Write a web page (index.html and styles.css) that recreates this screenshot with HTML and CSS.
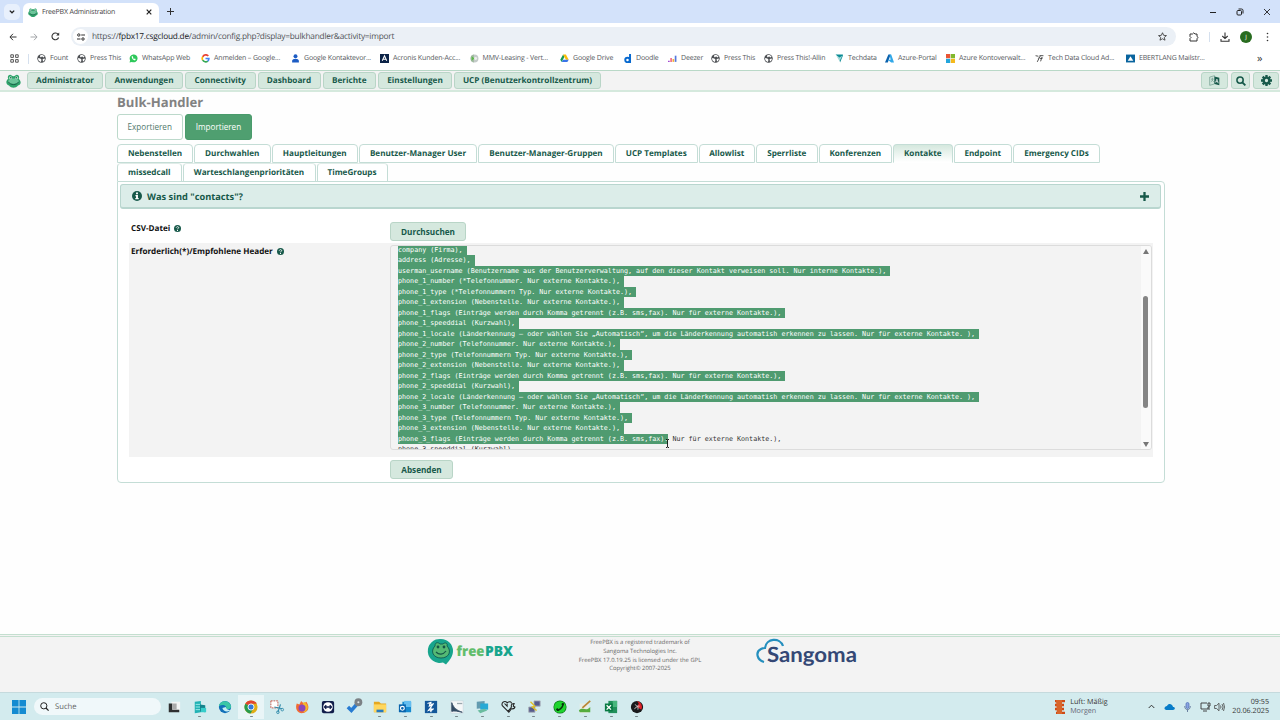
FILE: index.html
```html
<!DOCTYPE html>
<html lang="de">

<head>
    <meta charset="UTF-8">
    <meta name="viewport" content="width=device-width, initial-scale=1.0">
    <title>FreePBX Administration</title>
    <link rel="stylesheet" href="styles.css">
</head>

<body>
    <!-- Shared icons -->
    <svg class="sprite" width="0" height="0">
        <symbol id="frog" viewBox="0 0 20 18">
            <path d="M3 6C1 2 5-1 8 2c1 .7 3 .7 4 0 3-3 7 0 5 4 4 4 3 8-1 9-3 4-9 4-12 0C0 14-1 9 3 6z" fill="#2fa36b"/>
            <path d="M4 7c3-2 9-2 12 0 2 3 1 5-2 5-3 1-5 1-8 0-3 0-4-2-2-5z" fill="#6cc59a"/>
            <circle cx="6" cy="4.5" r="2" fill="#b6e5cc"/><circle cx="14" cy="4.5" r="2" fill="#b6e5cc"/>
            <circle cx="6.3" cy="4.8" r="1" fill="#175a44"/><circle cx="13.7" cy="4.8" r="1" fill="#175a44"/>
            <path d="M3 10c3 5 11 5 14 0" fill="none" stroke="#175a44" stroke-width="1.2"/>
        </symbol>
        <symbol id="globe" viewBox="0 0 16 16">
            <circle cx="8" cy="8" r="7.500" fill="#4a4d51"/>
            <path d="M2 7l4 1 2 2-1 4C3 13 1.500 10 2 7zM6 2c3-1 6 0 7.500 3L11 6 9 4 7 6 5 4zM10 9l4-1c0 3-1.500 5-3.500 5.500z" fill="#fff"/>
        </symbol>
        <symbol id="help" viewBox="0 0 16 16">
            <circle cx="8" cy="8" r="8" fill="#17594a"/>
            <path d="M5.300 6.200C5.500 2.800 11 3 10.700 6.200 10.500 8 8 7.800 8 9.800" fill="none" stroke="#fff" stroke-width="2"/>
            <circle cx="8" cy="12.300" r="1.300" fill="#fff"/>
        </symbol>
    </svg>

    <!-- Browser tabs -->
    <div class="tabbar">
        <div class="tab-search"><svg width="6" height="4" viewBox="0 0 6 4"><path d="M.8.6L3 2.800 5.200.6" fill="none" stroke="#222" stroke-width="1.300"/></svg></div>
        <div class="browser-tab">
            <svg width="10" height="9"><use href="#frog"/></svg>
            <span>FreePBX Administration</span>
            <svg class="tab-close" width="6" height="6" viewBox="0 0 6 6"><path d="M.7.7l4.600 4.600M5.300.7L.7 5.300" stroke="#222" stroke-width="1.200"/></svg>
        </div>
        <svg class="tab-new" width="7" height="7" viewBox="0 0 7 7"><path d="M3.500 0v7M0 3.500h7" stroke="#333" stroke-width="1"/></svg>
        <div class="window-buttons">
            <svg width="8" height="8" viewBox="0 0 8 8"><path d="M1 4.500h6" stroke="#222"/></svg>
            <svg width="8" height="8" viewBox="0 0 8 8"><rect x="1" y="2.500" width="4.500" height="4.500" rx="1" fill="none" stroke="#222"/><path d="M2.500 1H5.500Q7 1 7 2.500V5.500" fill="none" stroke="#222"/></svg>
            <svg width="8" height="8" viewBox="0 0 8 8"><path d="M1 1l6 6M7 1L1 7" stroke="#222" stroke-width=".9"/></svg>
        </div>
    </div>

    <!-- Address bar -->
    <div class="toolbar">
        <svg width="8" height="8" viewBox="0 0 8 8"><path d="M7.500 4H1M4 .8L.9 4 4 7.200" fill="none" stroke="#333" stroke-width="1"/></svg>
        <svg width="8" height="8" viewBox="0 0 8 8"><path d="M.5 4H7M4 .8L7.100 4 4 7.200" fill="none" stroke="#a3a6a9" stroke-width="1"/></svg>
        <svg width="9" height="9" viewBox="0 0 9 9"><path d="M7.600 5.500A3.400 3.400 0 1 1 7.200 2.500" fill="none" stroke="#333" stroke-width="1.100"/><path d="M8.200.6v3H5.200z" fill="#333"/></svg>
        <div class="url">
            <div class="site-info"><svg width="8" height="8" viewBox="0 0 8 8"><path d="M4.200 2H8M0 6h3.500" stroke="#333" stroke-width="1.100"/><circle cx="1.800" cy="2" r="1.200" fill="none" stroke="#333"/><circle cx="6" cy="6" r="1.200" fill="none" stroke="#333"/></svg></div>
            <span class="address">https://<b>fpbx17.csgcloud.de</b>/admin/config.php?display=bulkhandler&amp;activity=import</span>
            <svg class="star" width="9" height="9" viewBox="0 0 10 10"><path d="M5 .8l1.300 2.900 3.100.3-2.400 2 .8 3.100L5 7.500 2.200 9.100 3 6 .6 4l3.100-.3z" fill="none" stroke="#333" stroke-width=".9"/></svg>
        </div>
        <div class="toolbar-right">
            <svg width="10" height="10" viewBox="0 0 10 10"><path d="M1 2h2.500Q4.700-.3 6 2h2v2.500q2.300 1 0 2.200V9H1V6.500q2-1 0-2z" fill="none" stroke="#333"/></svg>
            <i class="divider"></i>
            <svg width="10" height="10" viewBox="0 0 10 10"><path d="M5 .5v6M2.300 4L5 6.600 7.700 4M1 7v2.300h8V7" fill="none" stroke="#333" stroke-width="1.100"/></svg>
            <span class="avatar">J</span>
            <svg class="menu-dots" width="3" height="10" viewBox="0 0 3 10"><g fill="#333"><circle cx="1.500" cy="1.500" r=".8"/><circle cx="1.500" cy="5" r=".8"/><circle cx="1.500" cy="8.500" r=".8"/></g></svg>
        </div>
    </div>

    <!-- Bookmarks -->
    <div class="bookmarks">
        <a><svg viewBox="0 0 9 9"><g fill="none" stroke="#444" stroke-width=".9"><path d="M.8.8h2.600v2.600H.8zM5.600.8h2.600v2.600H5.600zM.8 5.600h2.600v2.600H.8zM5.600 5.600h2.600v2.600H5.600z"/></g></svg><i class="divider"></i></a>
        <a><svg><use href="#globe"/></svg>Fount</a>
        <a><svg><use href="#globe"/></svg>Press This</a>
        <a><svg viewBox="0 0 16 16"><path d="M1 15l1-4A7 7 0 1 1 5 14z" fill="#2dc85a"/><path d="M5 4c-1 3 3 8 6 7l1-2-2-1-1 1-2-2 .7-1-.9-2z" fill="#fff"/></svg>WhatsApp Web</a>
        <a><svg viewBox="0 0 16 16" fill="none" stroke-width="3"><path d="M13 3.500A6 6 0 0 0 3 5" stroke="#e94335"/><path d="M3 5a6 6 0 0 0 0 6" stroke="#fbbc05"/><path d="M3 11a6 6 0 0 0 9 1.500" stroke="#34a853"/><path d="M12 12.500A6 6 0 0 0 14 8H8" stroke="#4285f4"/></svg>Anmelden – Google...</a>
        <a><svg viewBox="0 0 16 16"><circle cx="8" cy="4" r="3.500" fill="#1d5cc4"/><path d="M2 15v-3c0-5 12-5 12 0v3z" fill="#1d5cc4"/></svg>Google Kontaktevor...</a>
        <a><svg viewBox="0 0 16 16"><path d="M0 0h16v16H0z" fill="#0b2347"/><path d="M4 12L8 3l4 9M5.500 9.500h5" fill="none" stroke="#fff" stroke-width="1.800"/></svg>Acronis Kunden-Acc...</a>
        <a><svg viewBox="0 0 16 16"><circle cx="8" cy="8" r="7" fill="#c4cbc9"/><path d="M1 8a7 7 0 0 1 6-7v14a7 7 0 0 1-6-7z" fill="#a2bba2"/><path d="M3 4l5 4-5 4z" fill="#59b947"/><circle cx="10" cy="8" r="2.500" fill="#eee"/></svg>MMV-Leasing - Vert...</a>
        <a><svg viewBox="0 0 16 16"><path d="M5.500 1L8 5 3 14 .5 10z" fill="#159957"/><path d="M5.500 1h5l5 9h-5z" fill="#fbbc05"/><path d="M5.500 10h10L13 14H3z" fill="#3975e8"/></svg>Google Drive</a>
        <a><svg viewBox="0 0 16 16"><path d="M12.500 0v16M12 10.500a4 4 0 1 1-8 0 4 4 0 0 1 8 0z" fill="none" stroke="#0869cf" stroke-width="3.500"/></svg>Doodle</a>
        <a><svg viewBox="0 0 16 16"><path d="M0 12h3v2H0z" fill="#a44ad1"/><path d="M4 7h3v7H4z" fill="#f06c8a"/><path d="M8 9h3v5H8z" fill="#f5ad32"/><path d="M12 3h3v11h-3z" fill="#5579dc"/></svg>Deezer</a>
        <a><svg><use href="#globe"/></svg>Press This</a>
        <a><svg><use href="#globe"/></svg>Press This!-Allin</a>
        <a><svg viewBox="0 0 16 16"><path d="M1 1h13v2L9 15l-2-9z" fill="#0b8b94"/><path d="M2 2l6 4 5-3-5 10z" fill="#a0d8d8"/></svg>Techdata</a>
        <a><svg viewBox="0 0 16 16"><path d="M6 1h4L5 15H0z" fill="#0b62ad"/><path d="M8 1h3l5 14h-5L5 10h5z" fill="#32a8e8"/></svg>Azure-Portal</a>
        <a><svg viewBox="0 0 16 16"><path d="M0 0h7.500v7.500H0z" fill="#e95535"/><path d="M8.500 0H16v7.500H8.500z" fill="#80b82d"/><path d="M0 8.500h7.500V16H0z" fill="#23a5dc"/><path d="M8.500 8.500H16V16H8.500z" fill="#f5b91d"/></svg>Azure Kontoverwalt...</a>
        <a><svg viewBox="0 0 16 16"><path d="M1 3l5 1M8 3h7M6 8l4-5M4 14l4-8M10 13l2-7M9 8l5-1" stroke="#333" stroke-width="1.500"/></svg>Tech Data Cloud Ad...</a>
        <a><svg viewBox="0 0 16 16"><path d="M0 1h16v14H0z" fill="#09649e"/><path d="M3 12l5-8 5 8z" fill="#fff"/></svg>EBERTLANG Mailstr...</a>
        <a class="more">»</a>
    </div>

    <!-- Main navigation -->
    <nav class="navbar">
        <svg class="nav-logo" width="15" height="14"><use href="#frog"/></svg>
        <div class="nav-items">
            <a>Administrator</a>
            <a>Anwendungen</a>
            <a>Connectivity</a>
            <a>Dashboard</a>
            <a>Berichte</a>
            <a>Einstellungen</a>
            <a>UCP (Benutzerkontrollzentrum)</a>
        </div>
        <div class="nav-tools">
            <a><svg width="11" height="11" viewBox="0 0 16 16"><path d="M1 3l7-2v12l-7 2z" fill="#cfe5db" stroke="#709b8c"/><path d="M8 2l7 2v11l-7-2z" fill="#17594a"/><path d="M3 6h4M5 4v2c0 3-2 4-2 4m1-3l3 3" stroke="#709b8c" fill="none"/><path d="M9.500 11l2-5 2 6M10 9.500l3 .5" stroke="#fff" fill="none"/></svg></a>
            <a><svg width="10" height="10" viewBox="0 0 16 16"><circle cx="6.500" cy="6.500" r="5" fill="none" stroke="#17594a" stroke-width="2.500"/><path d="M10.500 10.500L15 15" stroke="#17594a" stroke-width="3"/></svg></a>
            <a><svg width="11" height="11" viewBox="0 0 16 16"><circle cx="8" cy="8" r="4.200" fill="none" stroke="#17594a" stroke-width="3.600"/><path d="M8 0v3M8 13v3M0 8h3M13 8h3M2.400 2.400l2 2M11.600 11.600l2 2M2.400 13.600l2-2M11.600 4.400l2-2" stroke="#17594a" stroke-width="3.400"/></svg></a>
        </div>
    </nav>

    <!-- Page content -->
    <main class="page">
        <h1>Bulk-Handler</h1>
        <div class="mode-buttons">
            <button class="mode">Exportieren</button>
            <button class="mode mode-active">Importieren</button>
        </div>

        <div class="tabs">
            <a>Nebenstellen</a>
            <a>Durchwahlen</a>
            <a>Hauptleitungen</a>
            <a>Benutzer-Manager User</a>
            <a>Benutzer-Manager-Gruppen</a>
            <a>UCP Templates</a>
            <a>Allowlist</a>
            <a>Sperrliste</a>
            <a>Konferenzen</a>
            <a class="active">Kontakte</a>
            <a>Endpoint</a>
            <a>Emergency CIDs</a>
        </div>
        <div class="tabs tabs-second">
            <a>missedcall</a>
            <a>Warteschlangenprioritäten</a>
            <a>TimeGroups</a>
        </div>

        <section class="panel">
            <div class="info-bar">
                <svg width="10" height="10" viewBox="0 0 16 16"><circle cx="8" cy="8" r="8" fill="#17594a"/><path d="M6.500 2.500h3v2.800h-3zM5.500 6.500h4v4.500h1.200v2H5.300v-2h1.200V8.500h-1z" fill="#fff"/></svg>
                <span>Was sind "contacts"?</span>
                <svg class="plus" width="9" height="9" viewBox="0 0 9 9"><path d="M4.500 0v9M0 4.500h9" stroke="#17594a" stroke-width="2.300"/></svg>
            </div>
            <div class="form-row">
                <label>CSV-Datei <svg width="7" height="7"><use href="#help"/></svg></label>
                <button class="btn">Durchsuchen</button>
            </div>
            <div class="form-row form-row-shaded">
                <label>Erforderlich(*)/Empfohlene Header <svg width="7" height="7"><use href="#help"/></svg></label>
                <div class="header-box">
                    <div class="header-list">
                        <p><mark>company (Firma), </mark></p>
                        <p><mark>address (Adresse), </mark></p>
                        <p><mark>userman_username (Benutzername aus der Benutzerverwaltung, auf den dieser Kontakt verweisen soll. Nur interne Kontakte.), </mark></p>
                        <p><mark>phone_1_number (*Telefonnummer. Nur externe Kontakte.), </mark></p>
                        <p><mark>phone_1_type (*Telefonnummern Typ. Nur externe Kontakte.), </mark></p>
                        <p><mark>phone_1_extension (Nebenstelle. Nur externe Kontakte.), </mark></p>
                        <p><mark>phone_1_flags (Einträge werden durch Komma getrennt (z.B. sms,fax). Nur für externe Kontakte.), </mark></p>
                        <p><mark>phone_1_speeddial (Kurzwahl), </mark></p>
                        <p><mark>phone_1_locale (Länderkennung – oder wählen Sie „Automatisch“, um die Länderkennung automatish erkennen zu lassen. Nur für externe Kontakte. ), </mark></p>
                        <p><mark>phone_2_number (Telefonnummer. Nur externe Kontakte.), </mark></p>
                        <p><mark>phone_2_type (Telefonnummern Typ. Nur externe Kontakte.), </mark></p>
                        <p><mark>phone_2_extension (Nebenstelle. Nur externe Kontakte.), </mark></p>
                        <p><mark>phone_2_flags (Einträge werden durch Komma getrennt (z.B. sms,fax). Nur für externe Kontakte.), </mark></p>
                        <p><mark>phone_2_speeddial (Kurzwahl), </mark></p>
                        <p><mark>phone_2_locale (Länderkennung – oder wählen Sie „Automatisch“, um die Länderkennung automatish erkennen zu lassen. Nur für externe Kontakte. ), </mark></p>
                        <p><mark>phone_3_number (Telefonnummer. Nur externe Kontakte.), </mark></p>
                        <p><mark>phone_3_type (Telefonnummern Typ. Nur externe Kontakte.), </mark></p>
                        <p><mark>phone_3_extension (Nebenstelle. Nur externe Kontakte.), </mark></p>
                        <p><mark>phone_3_flags (Einträge werden durch Komma getrennt (z.B. sms,fax).</mark> Nur für externe Kontakte.),</p>
                        <p>phone_3_speeddial (Kurzwahl),</p>
                    </div>
                    <div class="scrollbar">
                        <svg width="6" height="5" viewBox="0 0 6 5"><path d="M3 0l3 5H0z" fill="#777"/></svg>
                        <i class="thumb"></i>
                        <svg width="6" height="5" viewBox="0 0 6 5"><path d="M3 5l3-5H0z" fill="#777"/></svg>
                    </div>
                </div>
            </div>
            <div class="form-row form-submit">
                <button class="btn">Absenden</button>
            </div>
        </section>
    </main>
    <svg class="text-cursor" width="5" height="9" viewBox="0 0 5 9"><path d="M1 .5h1l.5.5.5-.5h1M2.500 1v7M1 8.500h1l.5-.5.5.5h1" fill="none" stroke="#111" stroke-width=".9"/></svg>

    <!-- Footer -->
    <footer class="footer">
        <svg class="logo-freepbx" width="86" height="28" viewBox="0 0 86 28">
            <path d="M13 1a12 12 0 0 1 12 12c0 5-3 9-7 13.500l-3-2A12 12 0 1 1 13 1z" fill="#18a58d"/>
            <path d="M7 8c0-4 3-4 5-2h3c2-2 5-1 4 2 5 5 2 12-6 12S2 13 7 8z" fill="#55b974" stroke="#115b50" stroke-width=".9"/>
            <circle cx="10" cy="9" r="1.400" fill="#145548"/><circle cx="16" cy="9" r="1.400" fill="#145548"/><path d="M8 14c3 3 7 3 10-1" fill="none" stroke="#145548" stroke-width="1.200"/>
            <text x="28.500" y="18" textLength="28" lengthAdjust="spacingAndGlyphs" fill="#62bd6c">free</text>
            <text x="57" y="18" textLength="28" lengthAdjust="spacingAndGlyphs" fill="#18a58d">PBX</text>
        </svg>
        <div class="legal">
            FreePBX is a registered trademark of<br>
            Sangoma Technologies Inc.<br>
            FreePBX 17.0.19.25 is licensed under the GPL<br>
            Copyright© 2007-2025
        </div>
        <svg class="logo-sangoma" width="102" height="32" viewBox="0 0 102 32">
            <path d="M8 24C1 22-1 14 5 11c2-1 3-1 4-1C10 0 24-1 27 8" fill="none" stroke="#258fbe" stroke-width="2.200"/>
            <text x="11" y="23.500" textLength="90" lengthAdjust="spacingAndGlyphs" fill="#344875">Sangoma</text>
        </svg>
    </footer>

    <!-- Taskbar -->
    <div class="taskbar">
        <svg width="14" height="14" viewBox="0 0 14 14"><path d="M0 0h6.600v6.600H0zM7.400 0H14v6.600H7.400zM0 7.400h6.600V14H0zM7.400 7.400H14V14H7.400z" fill="#158bd1"/></svg>
        <div class="search"><svg width="9" height="9" viewBox="0 0 9 9"><circle cx="3.800" cy="3.800" r="3.100" fill="none" stroke="#222"/><path d="M6 6l2.600 2.600" stroke="#222" stroke-width="1.200"/></svg>Suche</div>
        <div class="apps">
            <a><svg viewBox="0 0 16 16"><path d="M5 2h10v10H5z" fill="#f3f5f5"/><path d="M2 4h4v7h8v3H2z" fill="#2f3031"/><path d="M6 4h5v7H6z" fill="#aaa"/></svg></a>
            <a class="open"><svg viewBox="0 0 16 16"><path d="M2 2l7-1v13l-7 1z" fill="#21b2b4"/><path d="M8 5l6 1v8l-6-1z" fill="#14838c"/><path d="M3 5h5M3 8h5M3 11h5" stroke="#a8eeee"/><path d="M9 9h6v5H9z" fill="#36cdca"/></svg></a>
            <a><svg viewBox="0 0 16 16"><circle cx="8" cy="8" r="7" fill="#1270b8"/><path d="M1 7c1-7 12-8 14 0 0 3-3 4-6 3 2-3-3-6-8-3z" fill="#3bc6a5"/><path d="M5 9c1 4 5 5 9 3-1-1-5-1-5-4z" fill="#c7edf4"/></svg></a>
            <a class="current"><svg viewBox="0 0 16 16"><circle cx="8" cy="8" r="7.500" fill="#e1ad16"/><path d="M8 8L1.500 4.300A7.500 7.500 0 0 1 14.500 4.300H8z" fill="#e04432"/><path d="M8 8l-6.500-3.800A7.500 7.500 0 0 0 7.500 15.500L11 9z" fill="#279b4d"/><circle cx="8" cy="8" r="3.500" fill="#3179db" stroke="#fff"/></svg></a>
            <a><svg viewBox="0 0 16 16"><path d="M1 1h8v8H1z" fill="#fff" stroke="#c54a3c" stroke-dasharray="2 1"/><path d="M5 8l9 2M12 5l-3 9" stroke="#318bab" stroke-width="1.300"/><circle cx="14" cy="11" r="1.500" fill="none" stroke="#318bab"/><circle cx="9" cy="14" r="1.500" fill="none" stroke="#318bab"/></svg></a>
            <a><svg viewBox="0 0 16 16"><path d="M2 4l3 1 2-4 3 3 3-2c6 9-1 13-5 13-6 0-8-6-6-11z" fill="#f26b32"/><path d="M10 2c6 3 6 9 1 12-3-1-3-7-1-12z" fill="#f6b728"/><circle cx="8" cy="9" r="4" fill="#8a45ba"/></svg></a>
            <a><svg viewBox="0 0 16 16"><rect x="1" y="1" width="14" height="14" rx="2" fill="#111e4b"/><circle cx="8" cy="8" r="5.500" fill="#fff"/><path d="M4 8h8M6 6L4 8l2 2M10 6l2 2-2 2" fill="none" stroke="#111e4b" stroke-width="1.500"/></svg></a>
            <a><svg viewBox="0 0 16 16"><path d="M1 8l4 4 7-8" fill="none" stroke="#277bd2" stroke-width="4"/><circle cx="13" cy="2.500" r="4.500" fill="#7b8185"/><circle cx="13" cy="2.500" r="1.200" fill="#dfe3e4"/></svg></a>
            <a class="open"><svg viewBox="0 0 16 16"><path d="M1 2h6l2 2h6v10H1z" fill="#e5a820"/><path d="M1 5h14v9H1z" fill="#ffd75e"/><path d="M4 11h8v3H4z" fill="#2679bd"/></svg></a>
            <a class="open"><svg viewBox="0 0 16 16"><path d="M5 2h10v12H5z" fill="#168bd0"/><path d="M7 1h8v7H7z" fill="#64bef0"/><path d="M1 5h8v9H1z" fill="#0864ad"/><circle cx="5" cy="9.500" r="2.200" fill="none" stroke="#fff" stroke-width="1.300"/></svg></a>
            <a class="open"><svg viewBox="0 0 16 16"><path d="M1 1h14v14H1z" fill="#14579a"/><path d="M4 4l3-1-1 4 5-3-6 8 6-2-4 3M8 2v12" fill="none" stroke="#fff" stroke-width="1.200"/></svg></a>
            <a class="open"><svg viewBox="0 0 16 16"><path d="M1 1h14v14H1z" fill="#f5f7f8" stroke="#c1cdd0" stroke-width=".5"/><path d="M2 3c2 6 6 9 12 11-5-1-9-2-12-1z" fill="#334b63" stroke="#334b63"/><path d="M8 4h6" stroke="#9ba7ae" stroke-width="1.500"/></svg></a>
            <a class="open"><svg viewBox="0 0 16 16"><path d="M2 2l9-1v8l-9 1z" fill="#639bb0"/><path d="M6 4h9v7H6z" fill="#27a9d5"/><path d="M3 12l8-2 3 2-8 3z" fill="#6abc9f"/></svg></a>
            <a class="open"><svg viewBox="0 0 16 16"><path d="M8 13L1.500 6.500C0 3 4 0 7 3c3-2 5-1 5 1M4 4l3 3V4M8 13l4-5c-1-3 1-4 3-4l-1 3 2 1c-1 3-3 2-4 2l-3 4z" fill="none" stroke="#222" stroke-width="1.200"/></svg></a>
            <a class="open"><svg viewBox="0 0 16 16"><path d="M8 1h7v6H8zM2 8h7v6H2z" fill="#555b8c" stroke="#a7acb5"/><path d="M4 2l5 5-3 1 5 4" fill="none" stroke="#e2bf21" stroke-width="1.500"/></svg></a>
            <a class="open"><svg viewBox="0 0 16 16"><circle cx="8" cy="8" r="7.500" fill="#0b7a18"/><circle cx="8" cy="8" r="6.700" fill="#1fd42e"/><path d="M4.500 11.500c2 1 7-3 7-7" fill="none" stroke="#08320d" stroke-width="1.600"/><path d="M4 10l2.500 2M10 4.500l2.500.5" stroke="#08320d" stroke-width="2.400"/></svg></a>
            <a class="open"><svg viewBox="0 0 16 16"><path d="M2 4h10v11H2z" fill="#e9ede4"/><path d="M1 12c5-5 8 2 13-4v6H2z" fill="#55ad3e"/><path d="M5 9l9-8" stroke="#b98734" stroke-width="2"/></svg></a>
            <a class="open"><svg viewBox="0 0 16 16"><path d="M5 1h10v14H5z" fill="#22905a"/><path d="M10 1h5v7h-5z" fill="#49b77d"/><path d="M1 4h9v9H1z" fill="#087a43"/><path d="M3 6l5 5M8 6l-5 5" stroke="#fff" stroke-width="1.500"/></svg></a>
            <a class="open"><svg viewBox="0 0 16 16"><circle cx="8" cy="8" r="7" fill="#1a1a1c"/><path d="M8 1a7 7 0 0 1 5 10L8 8l2-4z" fill="#df2128"/><path d="M6 5c1 3 4 1 3 6M5 10c3-1 2-4 6-3" fill="none" stroke="#ddd"/></svg></a>
        </div>
        <div class="weather">
            <svg width="12" height="14" viewBox="0 0 12 14"><path d="M1 1h10M1 5h9M1 9h9M2 13h9" stroke="#cf4a16" stroke-width="2.600"/><path d="M2 0h6v14H3z" fill="#d8652b"/></svg>
            <div>Luft: Mäßig<br><span>Morgen</span></div>
        </div>
        <div class="tray">
            <svg width="7" height="5" viewBox="0 0 7 5"><path d="M.7 4l2.800-2.800L6.300 4" fill="none" stroke="#333"/></svg>
            <svg width="11" height="8" viewBox="0 0 11 8"><path d="M2 7C-1 6 1 3 3 3c2-4 6-1 6 1 3 0 2 3 0 3z" fill="#087cc8"/></svg>
            <svg width="7" height="10" viewBox="0 0 7 10"><rect x="2" y=".5" width="3" height="6" rx="1.500" fill="#8aa4df" stroke="#4769b4" stroke-width=".7"/><path d="M.7 4c0 5 5.600 5 5.600 0M3.500 7.500V10" fill="none" stroke="#53688e" stroke-width=".8"/></svg>
            <svg width="11" height="10" viewBox="0 0 11 10"><path d="M7 1H1v6h7V5M3 9h4M8 1h2v3H8zM9 4v4" fill="none" stroke="#333" stroke-width=".9"/></svg>
            <svg width="11" height="10" viewBox="0 0 11 10"><path d="M.6 3.500h2L5 1.200v7.600L2.600 6.500h-2zM6.500 3.500q1 1.500 0 3M8 2q2.200 3 0 6M9.500 1q2 4 0 8" fill="none" stroke="#444" stroke-width=".8"/></svg>
        </div>
        <div class="clock">09:55<br>20.06.2025</div>
    </div>
</body>

</html>
```
FILE: styles.css
```css
* {
    box-sizing: border-box;
}

body {
    margin: 0;
    width: 1280px;
    height: 720px;
    overflow: hidden;
    display: flex;
    flex-direction: column;
    background-color: #fefefe;
    font-family: "Open Sans", sans-serif;
    text-rendering: geometricPrecision;
}

svg {
    flex: none;
}

.sprite {
    position: absolute;
}

/* Browser chrome */
.tabbar {
    height: 23px;
    flex: none;
    display: flex;
    align-items: center;
    padding-left: 4px;
    background-color: #d3e2fa;
    font-size: 7px;
    letter-spacing: -0.19px;
}

.tab-search {
    width: 16px;
    height: 16px;
    border-radius: 5px;
    background-color: #e8f0fc;
    display: flex;
    align-items: center;
    justify-content: center;
}

.browser-tab {
    width: 136px;
    height: 20px;
    margin: 3px 0 0 3px;
    padding: 0 7px 2px 5px;
    border-radius: 6px 6px 0 0;
    background-color: #fff;
    display: flex;
    align-items: center;
    gap: 4px;
    color: #444;
}

.tab-close {
    margin-left: auto;
}

.tab-new {
    margin-left: 8px;
}

.window-buttons {
    margin-left: auto;
    padding-right: 9px;
    display: flex;
    gap: 19px;
}

.toolbar {
    height: 27px;
    flex: none;
    display: flex;
    align-items: center;
    padding: 0 11px 0 9px;
    gap: 13px;
    background-color: #fff;
}

.url {
    width: 1107px;
    height: 19px;
    margin-left: -2px;
    border-radius: 10px;
    background-color: #ebf0f6;
    display: flex;
    align-items: center;
    padding: 0 9px 0 2px;
    color: #505357;
    font-size: 8.300px;
    letter-spacing: -0.23px;
}

.url b {
    font-weight: 400;
    color: #202124;
}

.site-info {
    width: 15px;
    height: 15px;
    border-radius: 50%;
    background-color: #fff;
    display: flex;
    align-items: center;
    justify-content: center;
    margin-right: 4px;
}

.star {
    margin-left: auto;
}

.toolbar-right {
    display: flex;
    align-items: center;
    gap: 10px;
    margin-left: -6px;
    margin-left: auto;
}

.menu-dots {
    margin-left: 4px;
}

.divider {
    width: 1px;
    height: 10px;
    background-color: #d5e0ee;
}

.avatar {
    width: 12px;
    height: 12px;
    border-radius: 50%;
    background-color: #286c20;
    color: #fff;
    font-size: 6px;
    line-height: 12px;
    text-align: center;
}

.bookmarks {
    height: 20px;
    flex: none;
    display: grid;
    grid-template-columns: 27px 40px 52px 72px 90px 89px 89.500px 90.500px 63px 45px 43px 53px 71px 50px 61px 89px 91px 131px auto;
    padding-left: 10px;
    background-color: #fff;
    color: #55585c;
    font-size: 7px;
    letter-spacing: -0.15px;
}

.bookmarks a {
    display: flex;
    align-items: center;
    gap: 4px;
    height: 17px;
    white-space: nowrap;
}

.bookmarks svg {
    width: 9px;
    height: 9px;
}

.bookmarks .divider {
    margin-left: 5px;
}

.bookmarks .more {
    font-size: 11px;
    color: #333;
}

/* Navigation */
.navbar {
    height: 22px;
    flex: none;
    display: flex;
    align-items: center;
    padding: 0 1px 0 6px;
    border-top: 1px solid #b9d8c7;
    border-bottom: 2px solid #d5e9dd;
    background-color: #f3f3f3;
}

.nav-logo {
    margin-right: 6px;
}

.nav-items {
    display: grid;
    grid-template-columns: 76px 78px 70.500px 63px 53.500px 74px 147px;
    gap: 2px;
}

.nav-items a,
.nav-tools a {
    height: 17px;
    border: 1px solid #b9d5c7;
    border-radius: 3px;
    background-color: #d5e8de;
    color: #17594a;
    font-size: 8.200px;
    font-weight: 700;
    display: flex;
    align-items: center;
    justify-content: center;
    white-space: nowrap;
}

.nav-tools {
    margin-left: auto;
    display: grid;
    grid-template-columns: 27px 19px 26px;
    gap: 3px;
}

/* Content */
.page {
    width: 1048px;
    margin-left: 117px;
    flex: 1;
}

h1 {
    margin: 2px 0 2.500px;
    color: #828282;
    font-size: 13.100px;
    line-height: 17px;
    font-weight: 700;
}

.mode-buttons {
    display: flex;
    gap: 2.500px;
    margin-bottom: 4.500px;
}

.mode {
    width: 65.500px;
    height: 26px;
    padding: 0;
    border: 1px solid #bcd9cb;
    border-radius: 3px;
    background-color: #fff;
    color: #52796d;
    font: 8.150px "Open Sans", sans-serif;
}

.mode-active {
    width: 67px;
    border-color: #4a9b6c;
    background-color: #4f9f70;
    color: #fff;
}

.tabs {
    display: grid;
    grid-template-columns: 76px 76.500px 86.500px 118px 136px 82.500px 56.500px 61.500px 73.500px 59.500px 58.500px 87px;
    gap: 1px;
    height: 19px;
}

.tabs-second {
    grid-template-columns: 64.500px 133px 71px;
    height: 18px;
}

.tabs a {
    border: 1px solid #c4ddd6;
    border-radius: 4px 4px 0 0;
    background-color: #fff;
    color: #17594a;
    font-size: 8.150px;
    font-weight: 700;
    display: flex;
    align-items: center;
    justify-content: center;
    white-space: nowrap;
}

.tabs-second a {
    border-top-color: #e0ece8;
    border-bottom: none;
}

.tabs .active {
    border-bottom-color: #fff;
    background: linear-gradient(#d5e8de, #fff);
}

.panel {
    height: 302px;
    padding: 2px;
    border: 1px solid #c4ddd6;
    border-radius: 0 4px 4px 4px;
    background-color: #fff;
}

.info-bar {
    height: 25px;
    margin-right: 1px;
    margin-bottom: 10px;
    padding: 0 11px;
    border: 1px solid #b9d6cf;
    border-bottom-width: 2px;
    border-radius: 3px;
    background-color: #dcede9;
    color: #17594a;
    font-size: 9.250px;
    font-weight: 700;
    display: flex;
    align-items: center;
    gap: 5px;
}

.plus {
    margin-left: auto;
}

.form-row {
    display: grid;
    grid-template-columns: 259px 762px;
    margin: 0 9px;
    padding-left: 2px;
    height: 24px;
    color: #111;
}

.form-row label {
    font-size: 8.150px;
    font-weight: 700;
    line-height: 20px;
    white-space: nowrap;
}

.form-row label svg {
    margin-left: 2px;
    vertical-align: -1px;
}

.form-row-shaded {
    height: 214px;
    padding-top: 2px;
    background-color: #f3f3f3;
}

.form-row-shaded label {
    line-height: 14px;
}

.form-submit {
    padding: 3px 0 0 261px;
}

.btn {
    width: 76px;
    height: 19px;
    margin-top: 3px;
    padding: 0;
    border: 1px solid #b9d5c7;
    border-radius: 3px;
    background-color: #d5e8de;
    color: #17594a;
    font: 700 8.200px "Open Sans", sans-serif;
}

.form-submit .btn {
    width: 63px;
    margin-top: 0;
}

.header-box {
    height: 205px;
    border: 1px solid #dcdcdc;
    border-radius: 3px;
    overflow: hidden;
    display: flex;
    justify-content: space-between;
    background-color: #f3f3f3;
}

.header-list {
    margin-top: -1.500px;
    padding-left: 7px;
    color: #333;
    font-family: "DejaVu Sans Mono", monospace;
    font-size: 6.714px;
}

.header-list p {
    display: flex;
    margin: 0;
    height: 10.500px;
    line-height: 10.500px;
    white-space: pre;
}

mark {
    background-color: #4f9b70;
    color: #fff;
}

.scrollbar {
    width: 10px;
    padding: 3px 2px 2px;
    background-color: #fafafa;
    display: flex;
    flex-direction: column;
    justify-content: space-between;
}

.thumb {
    width: 5px;
    height: 112px;
    margin-bottom: -7px;
    border-radius: 3px;
    background-color: #858585;
}

.text-cursor {
    position: absolute;
    left: 665px;
    top: 439px;
}

/* Footer */
.footer {
    height: 58px;
    flex: none;
    display: flex;
    padding: 1px 0 0 428px;
    border-top: 3px double #c4dfcf;
    background-color: #f3f3f3;
}

.footer svg {
    overflow: visible;
}

.footer text {
    font-family: "Open Sans", sans-serif;
    font-weight: 800;
    font-size: 14px;
}

.footer .logo-sangoma text {
    font-family: Lato, sans-serif;
    font-weight: 700;
    font-size: 21px;
}

.legal {
    width: 252px;
    color: #666;
    font-size: 5.850px;
    line-height: 8.750px;
    text-align: center;
}

.logo-sangoma {
    margin-left: -10px;
}

/* Taskbar */
.taskbar {
    height: 28px;
    flex: none;
    display: flex;
    align-items: center;
    padding-left: 12px;
    border-top: 1px solid #c5dadd;
    background-color: #d3ebee;
    font-size: 7.200px;
    color: #333;
}

.search {
    width: 127px;
    height: 17px;
    margin-left: 8px;
    padding-left: 6px;
    border-radius: 9px;
    background-color: #f0f8fa;
    display: flex;
    align-items: center;
    gap: 6px;
    color: #666;
    font-size: 7.700px;
}

.apps {
    display: flex;
}

.apps a {
    width: 25.730px;
    height: 24px;
    display: flex;
    flex-direction: column;
    align-items: center;
    justify-content: center;
}

.apps svg {
    width: 14px;
    height: 14px;
    overflow: visible;
}

.apps .open::after,
.apps .current::after {
    content: "";
    width: 3px;
    height: 1.500px;
    margin: 2px 0 -3.500px;
    border-radius: 1px;
    background-color: #77868a;
}

.apps .current {
    background-color: #e9f5f7;
}

.weather {
    width: 94px;
    margin-left: 404px;
    display: flex;
    align-items: center;
    gap: 4.500px;
    line-height: 9px;
}

.weather span {
    color: #667;
}

.tray {
    display: flex;
    align-items: center;
    gap: 9px;
}

.tray svg:last-child {
    margin-left: -6px;
}

.clock {
    margin-left: auto;
    padding-right: 11px;
    line-height: 9px;
    text-align: right;
}
```
